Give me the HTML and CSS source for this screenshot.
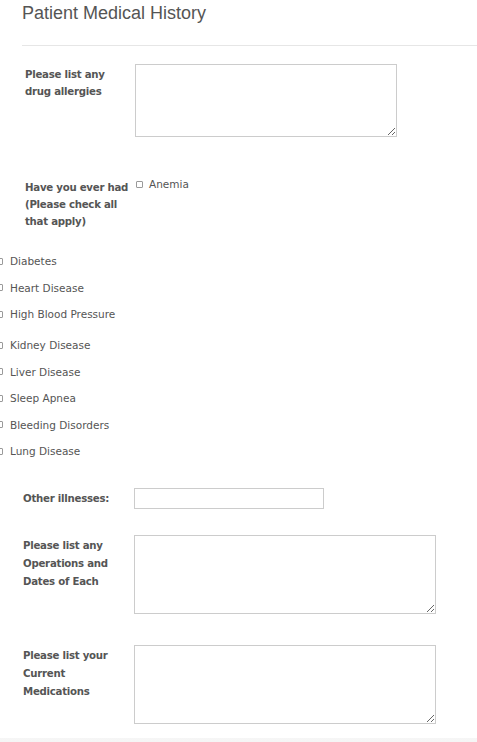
FILE: index.html
```html
<!DOCTYPE html>
<html lang="en">
<head>
<meta charset="utf-8">
<title>Patient Medical History</title>
<link rel="stylesheet" href="styles.css">
</head>
<body>
<div class="page">
  <h1 class="title">Patient Medical History</h1>
  <div class="rule"></div>

  <div class="row row-top row-a">
    <div class="label label-a">Please list any<br>drug allergies</div>
    <textarea class="ta ta-small"></textarea>
  </div>

  <div class="row row-top row-b">
    <div class="label label-a">Have you ever had<br>(Please check all<br>that apply)</div>
    <label class="check check-first"><span class="box"></span>Anemia</label>
  </div>

  <ul class="checklist">
    <li class="item"><span class="box"></span>Diabetes</li>
    <li class="item"><span class="box"></span>Heart Disease</li>
    <li class="item"><span class="box"></span>High Blood Pressure</li>
    <li class="item item-gap"><span class="box"></span>Kidney Disease</li>
    <li class="item"><span class="box"></span>Liver Disease</li>
    <li class="item"><span class="box"></span>Sleep Apnea</li>
    <li class="item"><span class="box"></span>Bleeding Disorders</li>
    <li class="item"><span class="box"></span>Lung Disease</li>
  </ul>

  <div class="row row-center row-c">
    <div class="label label-b">Other illnesses:</div>
    <input class="text-input" type="text">
  </div>

  <div class="row row-top row-d">
    <div class="label label-b label-tall">Please list any<br>Operations and<br>Dates of Each</div>
    <textarea class="ta ta-large"></textarea>
  </div>

  <div class="row row-top row-e">
    <div class="label label-b label-tall">Please list your<br>Current<br>Medications</div>
    <textarea class="ta ta-large"></textarea>
  </div>

  <div class="band"></div>
</div>
</body>
</html>
```
FILE: styles.css
```css
html, body {
  margin: 0;
  padding: 0;
  background: #ffffff;
}

.page {
  font-family: "DejaVu Sans", Verdana, sans-serif;
  color: #555555;
  overflow: hidden;
}

.title {
  margin: 0;
  padding-left: 22px;
  font-family: "Liberation Sans", Arial, sans-serif;
  font-weight: normal;
  font-size: 18px;
  line-height: 26px;
  color: #555555;
}

.rule {
  margin: 19px 0 0 22px;
  height: 1px;
  background: #e6e6e6;
}

.row {
  display: flex;
}

.row-top {
  align-items: flex-start;
}

.row-center {
  align-items: center;
}

.row-a {
  margin-top: 18px;
  padding-left: 25px;
}

.row-b {
  margin-top: 40px;
  padding-left: 25px;
}

.row-c {
  margin-top: 23.5px;
  padding-left: 23px;
}

.row-d {
  margin-top: 26px;
  padding-left: 23px;
}

.row-e {
  margin-top: 31px;
  padding-left: 23px;
}

.label {
  flex: none;
  font-weight: bold;
  font-size: 10.2px;
  letter-spacing: -0.25px;
  line-height: 17px;
  color: #555555;
  white-space: nowrap;
}

.label-a {
  width: 110px;
  padding-top: 2px;
}

.label-b {
  width: 111px;
}

.label-tall {
  line-height: 18px;
  padding-top: 2px;
}

.ta {
  flex: none;
  box-sizing: border-box;
  margin: 0;
  padding: 2px;
  border: 1px solid #cccccc;
  background: #ffffff;
  font-family: inherit;
  font-size: 11px;
}

.ta-small {
  width: 262px;
  height: 73px;
}

.ta-large {
  width: 302px;
  height: 79px;
}

.text-input {
  flex: none;
  box-sizing: border-box;
  width: 190px;
  height: 21px;
  margin: 0;
  padding: 0 3px;
  border: 1px solid #cccccc;
  background: #ffffff;
  font-family: inherit;
  font-size: 11px;
}

.check {
  display: flex;
  align-items: center;
  font-size: 10.5px;
  line-height: 15px;
  color: #555555;
}

.check-first {
  margin-left: 1px;
}

.box {
  display: inline-block;
  box-sizing: border-box;
  width: 7px;
  height: 7px;
  border: 1px solid #9a9a9a;
  border-radius: 1px;
  background: #ffffff;
  margin-right: 6px;
  flex: none;
}

.checklist {
  list-style: none;
  margin: 18px 0 0 0;
  padding: 0;
}

.item {
  display: flex;
  align-items: center;
  height: 26.5px;
  margin-left: -4px;
  font-size: 10.5px;
  color: #555555;
}

.item .box {
  margin-right: 7px;
}

.item-gap {
  margin-top: 4.5px;
}

.band {
  margin-top: 14px;
  height: 12px;
  background: linear-gradient(#f6f6f6, #f2f2f2);
}
```
